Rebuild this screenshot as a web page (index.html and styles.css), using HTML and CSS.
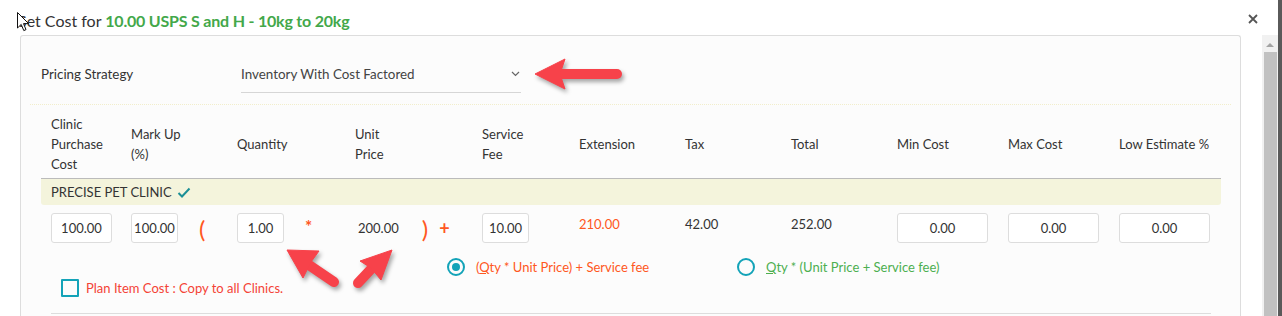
FILE: index.html
```html
<!DOCTYPE html>
<html lang="en">
<head>
    <meta charset="UTF-8">
    <title>Set Cost</title>
    <link rel="stylesheet" href="styles.css">
</head>
<body>

<div class="window">
    <div class="dialog">
        <div class="dialog-head">
            <h4 class="dialog-title">Set Cost for <span class="item-name">10.00 USPS S and H - 10kg to 20kg</span></h4>
            <span class="close">
                <svg width="10" height="10" viewBox="0 0 10 10"><path d="M1 1 L9 9 M9 1 L1 9" stroke="#555" stroke-width="1.8"/></svg>
            </span>
        </div>
        <div class="dialog-body">
            <div class="panel">
                <div class="strategy">
                    <label class="strategy-label">Pricing Strategy</label>
                    <div class="select">
                        <span>Inventory With Cost Factored</span>
                        <svg width="9" height="6" viewBox="0 0 9 6"><path d="M1 1 L4.5 4.5 L8 1" fill="none" stroke="#666" stroke-width="1.2"/></svg>
                    </div>
                </div>

                <div class="cost-table">
                    <div class="cost-grid cost-head">
                        <div>Clinic<br>Purchase<br>Cost</div>
                        <div>Mark Up<br>(%)</div>
                        <div>Quantity</div>
                        <div>Unit<br>Price</div>
                        <div>Service<br>Fee</div>
                        <div>Extension</div>
                        <div>Tax</div>
                        <div>Total</div>
                        <div>Min Cost</div>
                        <div>Max Cost</div>
                        <div>Low Estimate %</div>
                    </div>

                    <div class="clinic-row">
                        PRECISE PET CLINIC
                        <svg width="14" height="11" viewBox="0 0 14 11"><path d="M1.5 6 L5 9.5 L12.5 1.5" fill="none" stroke="#1b8f96" stroke-width="2"/></svg>
                    </div>

                    <div class="cost-grid cost-row">
                        <div><input class="num w-purchase" type="text" value="100.00"></div>
                        <div class="with-sign"><input class="num w-small" type="text" value="100.00"><span class="paren open">(</span></div>
                        <div class="with-sign"><input class="num w-small" type="text" value="1.00"><span class="times">*</span></div>
                        <div class="with-sign"><span class="unit-price">200.00</span><span class="paren close-paren">)</span><span class="plus">+</span></div>
                        <div><input class="num w-small" type="text" value="10.00"></div>
                        <div class="value extension">210.00</div>
                        <div class="value">42.00</div>
                        <div class="value">252.00</div>
                        <div><input class="num w-limit" type="text" value="0.00"></div>
                        <div><input class="num w-limit" type="text" value="0.00"></div>
                        <div><input class="num w-limit" type="text" value="0.00"></div>
                    </div>

                    <div class="formula-options">
                        <label class="option option-first">
                            <span class="radio checked"></span>
                            <span class="formula-a">(<u>Q</u>ty * Unit Price) + Service fee</span>
                        </label>
                        <label class="option">
                            <span class="radio"></span>
                            <span class="formula-b"><u>Q</u>ty * (Unit Price + Service fee)</span>
                        </label>
                    </div>

                    <label class="copy-all">
                        <span class="checkbox"></span>
                        <span>Plan Item Cost : Copy to all Clinics.</span>
                    </label>

                    <div class="rule"></div>
                </div>
            </div>

            <div class="scrollbar">
                <span class="scroll-up"></span>
                <span class="scroll-thumb"></span>
            </div>
        </div>
    </div>
    <div class="edge"></div>
</div>

<!-- annotation arrows drawn over the screenshot -->
<svg class="annotations" width="1282" height="316" viewBox="0 0 1282 316">
    <g class="arrow">
        <line x1="562" y1="74" x2="617" y2="74" stroke-width="10" stroke-linecap="round"/>
        <polygon points="535,74 565,59 560,74 565,89"/>
    </g>
    <g class="arrow">
        <line x1="306" y1="263" x2="334" y2="282" stroke-width="10" stroke-linecap="round"/>
        <polygon points="287,250 319,251 311,262 303,278"/>
    </g>
    <g class="arrow">
        <line x1="374" y1="266" x2="358" y2="283" stroke-width="10" stroke-linecap="round"/>
        <polygon points="392,250 360,261 371,268 381,280"/>
    </g>
</svg>

<svg class="cursor" width="13" height="20" viewBox="0 0 13 20">
    <path d="M0.5 0.5 L0.5 16 L4.2 12.4 L6.8 18.6 L9 17.6 L6.5 11.6 L11.6 11.6 Z" fill="#fff" stroke="#111" stroke-width="1"/>
</svg>

</body>
</html>
```

FILE: styles.css
```css
* {
    box-sizing: border-box;
}
body {
    margin: 0;
    background: #fff;
    font-family: Lato, "Open Sans", sans-serif;
    font-size: 13px;
    color: #333;
    overflow: hidden;
    height: 316px;
}
.window {
    display: flex;
    height: 316px;
}
.dialog {
    flex: 1;
    display: flex;
    flex-direction: column;
}
.dialog-head {
    display: flex;
    justify-content: space-between;
    align-items: center;
    height: 35px;
    padding: 3px 20px 0 18px;
}
.dialog-title {
    margin: 0;
    font-size: 16px;
    font-weight: normal;
    color: #333;
    padding-top: 2px;
}
.item-name {
    color: #43a84a;
    font-weight: bold;
    letter-spacing: -0.2px;
}
.close {
    display: flex;
}
.dialog-body {
    flex: 1;
    display: flex;
    padding-left: 20px;
}
.panel {
    flex: 1;
    margin-right: 21px;
    border: 1px solid #ddd;
    border-bottom: none;
    border-radius: 3px 3px 0 0;
    background: #fcfcfc;
    padding: 0 9px;
}
.strategy {
    display: flex;
    align-items: center;
    height: 69px;
    padding: 8px 11px 0;
    border-bottom: 1px dotted #f2eecb;
}
.strategy-label {
    width: 200px;
    line-height: 20px;
    font-size: 13.4px;
}
.select {
    width: 280px;
    height: 37px;
    display: flex;
    align-items: center;
    justify-content: space-between;
    border-bottom: 1px solid #d6d6d6;
    padding-right: 1px;
    color: #444;
    font-size: 13.4px;
}
.cost-table {
    margin: 0 10px 0 11px;
}
.cost-grid {
    display: grid;
    grid-template-columns: 80px 106px 118px 127px 97px 106px 106px 106px 111px 111px 112px;
}
.cost-grid > div {
    padding-left: 10px;
}
.cost-head {
    padding: 9px 0 4px;
    border-bottom: 1px solid #bbb;
    align-items: center;
    line-height: 20px;
}
.clinic-row {
    height: 26px;
    display: flex;
    align-items: center;
    gap: 5px;
    padding-left: 10px;
    background: #f4f4dc;
    border-radius: 0 0 3px 3px;
}
.cost-row {
    padding-top: 8px;
    align-items: start;
}
.num {
    height: 30px;
    border: 1px solid #ddd;
    border-radius: 3px;
    background: #fff;
    font-family: inherit;
    font-size: 13px;
    color: #333;
    text-align: center;
    padding: 0;
}
.w-purchase {
    width: 61px;
}
.w-small {
    width: 47px;
}
.w-limit {
    width: 91px;
}
.with-sign {
    display: flex;
    align-items: flex-start;
}
.paren {
    color: #ff5722;
    font-size: 24px;
    line-height: 32px;
}
.open {
    margin-left: 21px;
}
.times {
    color: #ff5722;
    font-size: 17px;
    font-weight: bold;
    margin-left: 21px;
    padding-top: 4px;
    line-height: 20px;
}
.unit-price {
    line-height: 30px;
    padding-left: 3px;
}
.close-paren {
    margin-left: 23px;
}
.plus {
    color: #ff5722;
    font-size: 18px;
    font-weight: bold;
    line-height: 30px;
    margin-left: 11px;
}
.value {
    line-height: 22px;
}
.extension {
    color: #ff5722;
}
.formula-options {
    display: flex;
    height: 20px;
    margin-top: 12px;
    padding-left: 406px;
}
.option {
    display: flex;
    align-items: center;
    gap: 11px;
}
.option-first {
    width: 290px;
}
.radio {
    width: 18px;
    height: 18px;
    border: 2px solid #13a3b8;
    border-radius: 50%;
    display: flex;
    align-items: center;
    justify-content: center;
}
.radio.checked::after {
    content: "";
    width: 8px;
    height: 8px;
    border-radius: 50%;
    background: #13a3b8;
}
.formula-a {
    color: #ff5722;
}
.formula-b {
    color: #4caf50;
}
.copy-all {
    display: flex;
    align-items: center;
    gap: 7px;
    margin-top: 2px;
    padding-left: 20px;
    height: 18px;
    color: #f44336;
}
.checkbox {
    width: 18px;
    height: 18px;
    border: 2px solid #13a3b8;
    border-radius: 1px;
}
.rule {
    margin: 16px 10px 0;
    border-top: 1px solid #ddd;
}
.scrollbar {
    width: 16px;
    background: #f1f1f1;
    display: flex;
    flex-direction: column;
    align-items: center;
}
.scroll-up {
    margin-top: 8px;
    width: 0;
    height: 0;
    border-left: 4px solid transparent;
    border-right: 4px solid transparent;
    border-bottom: 4px solid #a3a3a3;
}
.scroll-thumb {
    margin-top: 5px;
    width: 13px;
    flex: 1;
    background: #c1c1c1;
}
.edge {
    width: 4px;
    background: #5a5a5a;
}
.annotations {
    position: absolute;
    left: 0;
    top: 0;
    pointer-events: none;
}
.arrow {
    fill: #f7424a;
    stroke: #f7424a;
    filter: drop-shadow(2px 3px 2px rgba(0, 0, 0, 0.35));
}
.arrow polygon {
    stroke-width: 1;
    stroke-linejoin: round;
}
.cursor {
    position: absolute;
    left: 17px;
    top: 12px;
}
```
